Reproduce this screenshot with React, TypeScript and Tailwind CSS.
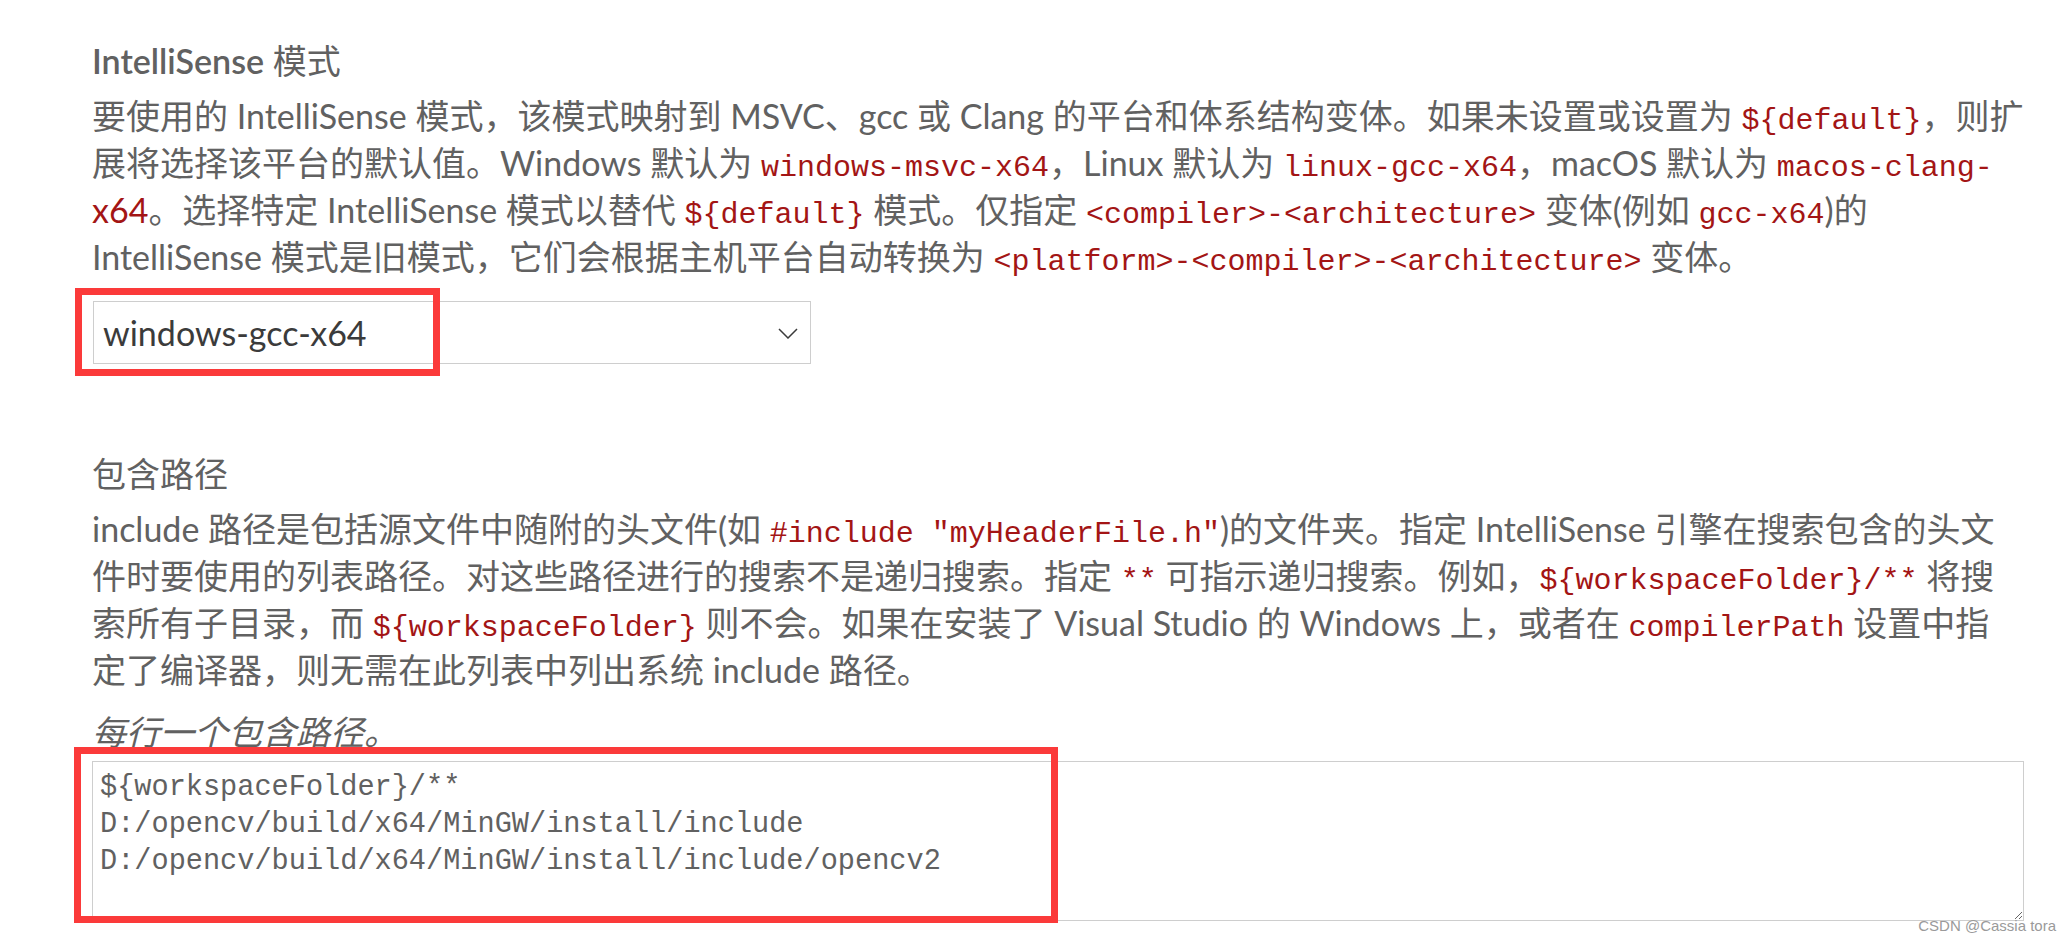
import React from "react";

const Code = ({ children }: { children: React.ReactNode }) => (
  <span className="font-['Liberation_Mono',monospace] text-[30px] text-[#a31515]">{children}</span>
);

const Line = ({ children }: { children: React.ReactNode }) => (
  <div className="h-[47px] leading-[47px] whitespace-nowrap">{children}</div>
);

export default function App() {
  return (
    <div className="relative w-full min-h-[939px] bg-white pl-[92px] pr-[48px] pt-[37px] font-[Lato,'Noto_Sans_CJK_SC',sans-serif] text-[34px] text-[#616161]">
      {/* Section 1 */}
      <div className="h-[47px] leading-[47px] whitespace-nowrap">
        <span className="font-semibold">IntelliSense</span> 模式
      </div>
      <div className="mt-[8px]">
        <Line>
          要使用的 IntelliSense 模式，该模式映射到 MSVC、gcc 或 Clang 的平台和体系结构变体。如果未设置或设置为 <Code>{"${default}"}</Code>，则扩
        </Line>
        <Line>
          展将选择该平台的默认值。Windows 默认为 <Code>windows-msvc-x64</Code>，Linux 默认为 <Code>linux-gcc-x64</Code>，macOS 默认为 <Code>macos-clang-</Code>
        </Line>
        <Line>
          <span className="text-[#a31515]">x64</span>。选择特定 IntelliSense 模式以替代 <Code>{"${default}"}</Code> 模式。仅指定 <Code>{"<compiler>-<architecture>"}</Code> 变体(例如 <Code>gcc-x64</Code>)的
        </Line>
        <Line>
          IntelliSense 模式是旧模式，它们会根据主机平台自动转换为 <Code>{"<platform>-<compiler>-<architecture>"}</Code> 变体。
        </Line>
      </div>

      <div className="relative mt-[21px] ml-px w-[718px]">
        <div className="flex h-[63px] items-center justify-between border border-[#cecece] pl-[9px] pr-[12px] text-[#3b3b3b]">
          <span className="leading-none">windows-gcc-x64</span>
          <svg width="20" height="11" viewBox="0 0 20 11" fill="none" className="mt-[2px]">
            <path d="M1 1L10 10L19 1" stroke="#3b3b3b" strokeWidth="1.5" />
          </svg>
        </div>
        <div className="pointer-events-none absolute left-[-18px] top-[-13px] h-[88px] w-[365px] border-[7px] border-[#fb3a3a]" />
      </div>

      {/* Section 2 */}
      <div className="mt-[86px] h-[47px] leading-[47px] whitespace-nowrap">包含路径</div>
      <div className="mt-[8px]">
        <Line>
          include 路径是包括源文件中随附的头文件(如 <Code>#include "myHeaderFile.h"</Code>)的文件夹。指定 IntelliSense 引擎在搜索包含的头文
        </Line>
        <Line>
          件时要使用的列表路径。对这些路径进行的搜索不是递归搜索。指定 <Code>**</Code> 可指示递归搜索。例如，<Code>{"${workspaceFolder}/**"}</Code> 将搜
        </Line>
        <Line>
          索所有子目录，而 <Code>{"${workspaceFolder}"}</Code> 则不会。如果在安装了 Visual Studio 的 Windows 上，或者在 <Code>compilerPath</Code> 设置中指
        </Line>
        <Line>定了编译器，则无需在此列表中列出系统 include 路径。</Line>
      </div>
      <div className="mt-[15px] h-[47px] leading-[47px] italic whitespace-nowrap">每行一个包含路径。</div>

      <div className="relative mt-[6px]">
        <textarea
          readOnly
          defaultValue={"${workspaceFolder}/**\nD:/opencv/build/x64/MinGW/install/include\nD:/opencv/build/x64/MinGW/install/include/opencv2"}
          className="block h-[160px] w-full resize-y border border-[#cecece] bg-white px-[7px] pt-[7px] font-['Liberation_Mono',monospace] text-[28.6px] leading-[37px] text-[#616161] outline-none"
        />
        <div className="pointer-events-none absolute left-[-18px] top-[-14px] h-[176px] w-[984px] border-[7px] border-[#fb3a3a]" />
      </div>

      <div className="pointer-events-none absolute bottom-[6px] right-[16px] font-['Liberation_Sans',Arial,sans-serif] text-[15px] leading-none text-[#9a9a9a]">
        CSDN @Cassia tora
      </div>
    </div>
  );
}
